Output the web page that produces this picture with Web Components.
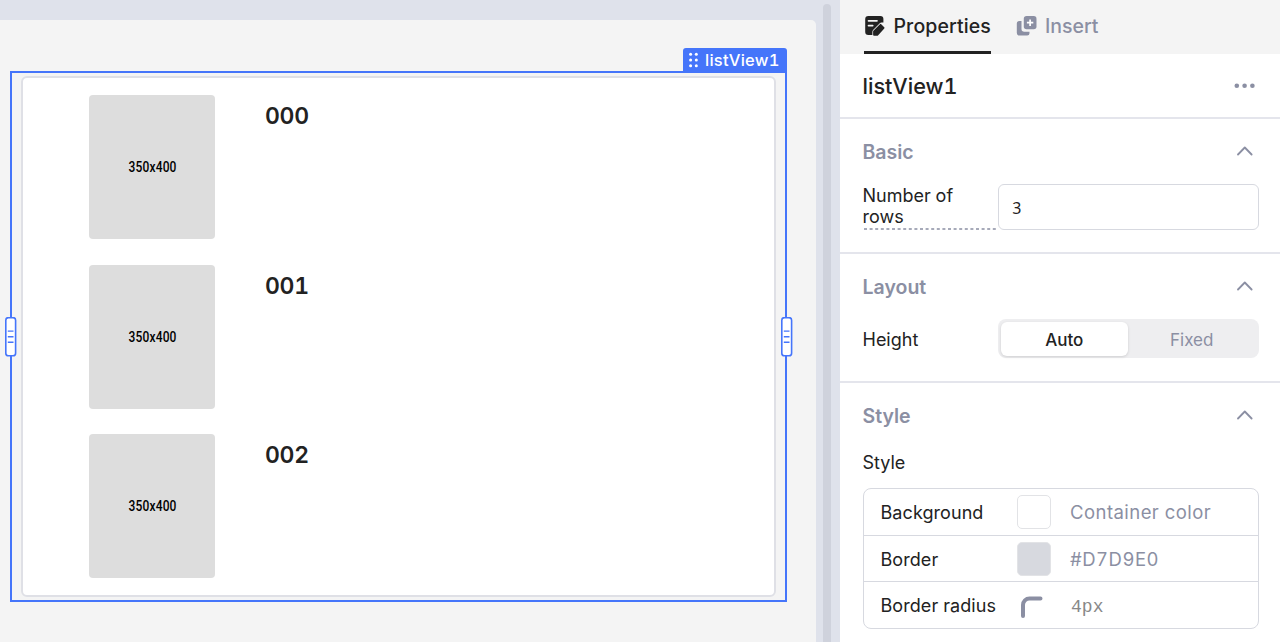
<!DOCTYPE html>
<html lang="en">
<head>
<meta charset="utf-8">
<title>listView1</title>
<style>
html,body{margin:0;height:100%;overflow:hidden}
body{font-family:Inter,"Liberation Sans",sans-serif;font-variant-numeric:tabular-nums;color:#222222;background:#fff}
</style>
</head>
<body>
<app-editor></app-editor>
<script>
const define=(name,html)=>{
  const t=document.createElement('template');
  t.innerHTML=html;
  customElements.define(name,class extends HTMLElement{
    constructor(){super();this.attachShadow({mode:'open'}).append(t.content.cloneNode(true));}
  });
};

define('list-item',`<style>
:host{display:flex;height:144px;gap:50px}
.pic{width:126px;height:144px;border-radius:4px;background:#ddd;display:flex;align-items:center;justify-content:center}
.pic span{font:500 15px/20px Roboto,sans-serif;color:#000;transform:translateX(.5px) scaleX(.8);white-space:nowrap;letter-spacing:.2px}
.name{font-size:23px;font-weight:600;line-height:42px;letter-spacing:-.3px}
</style><div class="pic"><span>350x400</span></div><div class="name"><slot></slot></div>`);

define('resize-handle',`<style>
:host{display:block;width:12px;height:40px}
svg{display:block}
</style><svg width="12" height="40" viewBox="0 0 12 40" fill="none" stroke="#4575fb"><rect x=".8" y=".6" width="9.800" height="38.2" rx="2.6" fill="#fff" stroke-width="1.6"/><path d="M2.800 14.1h5.700M2.800 19.7h5.700M2.800 25.3h5.700" stroke-width="1.4"/></svg>`);

define('widget-label',`<style>
:host{display:flex;align-items:center;box-sizing:border-box;width:104.5px;height:24px;padding-left:5.5px;background:#4575fa;border-radius:3px 3px 0 0;color:#fff;font-size:16.5px;font-weight:500;letter-spacing:.25px;white-space:nowrap}
svg{margin-right:6px}
</style><svg width="11" height="16" viewBox="0 0 11 16" fill="#fff"><circle cx="2.6" cy="2.3" r="1.5"/><circle cx="8.3" cy="2.3" r="1.5"/><circle cx="2.6" cy="8" r="1.5"/><circle cx="8.3" cy="8" r="1.5"/><circle cx="2.6" cy="13.7" r="1.5"/><circle cx="8.3" cy="13.7" r="1.5"/></svg><slot></slot>`);

define('list-view',`<style>
:host{display:block;position:relative;box-sizing:border-box;width:777px;height:531px;border:2px solid #4575fa;padding:3px 9px 3px}
.box{box-sizing:border-box;height:521px;width:755px;border:2px solid #dfe0e6;border-radius:6px;background:#fff;padding:17px 0 0 66px;display:flex;flex-direction:column;gap:25.7px}
widget-label{position:absolute;right:-2px;top:-25px}
.l,.r{position:absolute;top:244px}
.l{left:-7px}.r{right:-8px}
</style><div class="box"><slot></slot></div><widget-label>listView1</widget-label><resize-handle class="l"></resize-handle><resize-handle class="r"></resize-handle>`);

define('design-canvas',`<style>
:host{display:flex;box-sizing:border-box;width:840px;height:642px;background:#dfe2eb;padding-top:20px}
.page{box-sizing:border-box;width:816px;height:622px;background:#f4f4f4;border-radius:0 5px 0 0;padding:51px 0 0 10px}
.bar{width:8px;height:640px;margin:-16px 0 0 7px;border-radius:4px 4px 0 0;background:#cfd2dc}
</style><div class="page"><list-view><list-item>000</list-item><list-item>001</list-item><list-item>002</list-item></list-view></div><div class="bar"></div>`);

define('panel-tabs',`<style>
:host{display:flex;box-sizing:border-box;height:54px;padding-left:24px;gap:25px;background:#f4f4f4;font-size:19.5px;font-weight:500}
.tab{display:flex;align-items:center;box-sizing:border-box;height:54px;border-bottom:3px solid transparent;gap:8px;white-space:nowrap}
.on{width:127px;border-color:#222}
.on b{letter-spacing:.1px;margin-left:.5px}
b{font-weight:500}
.off{color:#8b8fa3}
svg{flex:none}
</style>
<div class="tab on"><svg width="21" height="22" viewBox="0 0 21 22"><path d="M4.400 1h12a3 3 0 0 1 3 3v3.600h-1.800a3 3 0 0 0-2.100.9l-6.200 6.200a3 3 0 0 0-.9 2.100V20h-4a3.200 3.200 0 0 1-3.200-3.200V4.200A3.200 3.200 0 0 1 4.400 1z" fill="#222"/><path d="M4.500 5.800h8.500M4.500 10.600h4.200" stroke="#f4f4f4" stroke-width="1.700" stroke-linecap="round"/><path d="m16.600 9.800 3 3-6.300 7H10v-3.300z" fill="#222" stroke="#222" stroke-width="1.800" stroke-linejoin="round"/></svg><b>Properties</b></div>
<div class="tab off"><svg width="21" height="22" viewBox="0 0 21 22"><rect x="7.800" y="1" width="12.700" height="13.300" rx="2.800" fill="#8b8fa3"/><path d="M14.100 4.500v6.400M10.900 7.700h6.400" stroke="#fff" stroke-width="1.700"/><path d="M5.500 6H3.300A2.500 2.500 0 0 0 .8 8.500v9.300a2.800 2.800 0 0 0 2.800 2.800h7.500a2.400 2.400 0 0 0 2.400-2.400v-1.400H8.200a2.700 2.700 0 0 1-2.700-2.700z" fill="#8b8fa3"/></svg><b>Insert</b></div>`);

define('panel-title',`<style>
:host{display:flex;box-sizing:border-box;height:65px;padding:0 24px 0 22.5px;align-items:center;justify-content:space-between;border-bottom:2px solid #e4e5ec;font-size:21.7px;font-weight:500}
svg{display:block}
</style><span><slot></slot></span><svg width="22" height="6" viewBox="0 0 22 6" fill="#8b8fa3"><circle cx="2.800" cy="2.700" r="2.3"/><circle cx="10.600" cy="2.700" r="2.3"/><circle cx="18.400" cy="2.700" r="2.3"/></svg>`);

define('panel-section',`<style>
:host{display:block;box-sizing:border-box;padding:19px 21.5px 0 22.5px;border-bottom:2px solid #e4e5ec}
header{display:flex;align-items:center;justify-content:space-between;height:28px;padding-right:6px;color:#8b8fa3;font-size:19.5px;font-weight:600}
header svg{margin-bottom:2px}
</style><header><slot name="title"></slot><svg width="16" height="10" viewBox="0 0 16 10" fill="none" stroke="#8b8fa3" stroke-width="1.8" stroke-linecap="round" stroke-linejoin="round"><path d="m1 8.5 6.800-7 6.800 7"/></svg></header><slot></slot>`);

define('rows-field',`<style>
:host{display:flex;margin-top:18px;height:46px;font-size:18px}
.label{box-sizing:border-box;width:135.5px;height:46px;line-height:21px;padding-top:1px}
.label svg{display:block;margin-top:1px}
.input{box-sizing:border-box;width:261px;height:46px;border:1.5px solid #d7d9e0;border-radius:6px;padding-left:13.5px;font:16px/46px "Noto Sans",sans-serif}
</style><div class="label">Number of<br>rows<svg width="135" height="2"><path d="M1 1h134" stroke="#8b8fa3" stroke-width="1.5" stroke-dasharray="3 2.6"/></svg></div><div class="input">3</div>`);

define('height-field',`<style>
:host{display:flex;align-items:center;margin-top:18px;height:39px;font-size:18px}
.label{width:135.5px;padding-top:1px}
.seg{display:flex;box-sizing:border-box;width:261px;height:39px;padding:3px;border-radius:8px;background:#eeeef0;font-size:17px;line-height:36px;text-align:center}
.seg span{width:128px}
.seg .a{background:#fff;border-radius:6px;box-shadow:0 1px 3px #0002;font-weight:500;height:34px}
.seg .f{color:#8b8fa3}
</style><div class="label">Height</div><div class="seg"><span class="a">Auto</span><span class="f">Fixed</span></div>`);

define('style-row',`<style>
:host{display:flex;align-items:center;flex:1;padding-left:17px;font-size:18px;letter-spacing:.07px;white-space:nowrap}
.n{width:136px;padding-top:1px}
.s{width:53.5px;display:flex}
.v{color:#8b8fa3}
</style><div class="n"><slot></slot></div><div class="s"><slot name="swatch"></slot></div><div class="v"><slot name="value"></slot></div>`);

define('color-swatch',`<style>
:host{display:block;box-sizing:border-box;width:34px;height:34px;border:1.5px solid #e2e3e6;border-radius:5px;background:var(--color,#fff)}
</style>`);

define('style-table',`<style>
:host{display:block;font-size:18px}
.h{margin-top:19px;line-height:28px}
.t{margin-top:11px;box-sizing:border-box;width:396.5px;height:141px;border:1.5px solid #d7d9e0;border-radius:8px;display:flex;flex-direction:column}
style-row+style-row{border-top:1.5px solid #d7d9e0}
.c{font-size:18.5px;letter-spacing:.45px}
.x{font-size:18.5px;letter-spacing:.5px}
.m{font:18px "Liberation Mono",monospace;color:#888;padding-left:1px;position:relative;top:1px}
svg{margin:2px 0 0 3.5px}
</style><div class="h">Style</div><div class="t">
<style-row>Background<color-swatch slot="swatch"></color-swatch><span slot="value" class="c">Container color</span></style-row>
<style-row>Border<color-swatch slot="swatch" style="--color:#d7d9df"></color-swatch><span slot="value" class="x">#D7D9E0</span></style-row>
<style-row>Border radius<svg slot="swatch" width="24" height="24" viewBox="0 0 24 24" fill="none" stroke="#8b8fa3" stroke-width="4" stroke-linecap="round"><path d="M3 22v-11a6.500 6.500 0 0 1 6.500-6.500h11"/></svg><span slot="value" class="m">4px</span></style-row></div>`);

define('property-panel',`<style>
:host{display:block;width:440px;height:642px;background:#fff;overflow:hidden}
.b{height:135px}.l{height:129px}.s{border:0}
</style><panel-tabs></panel-tabs><panel-title>listView1</panel-title>
<panel-section class="b"><span slot="title">Basic</span><rows-field></rows-field></panel-section>
<panel-section class="l"><span slot="title">Layout</span><height-field></height-field></panel-section>
<panel-section class="s"><span slot="title">Style</span><style-table></style-table></panel-section>`);

define('app-editor',`<style>:host{display:grid;grid-template-columns:840px 440px;height:642px;overflow:hidden}</style><design-canvas></design-canvas><property-panel></property-panel>`);
</script>
</body>
</html>
